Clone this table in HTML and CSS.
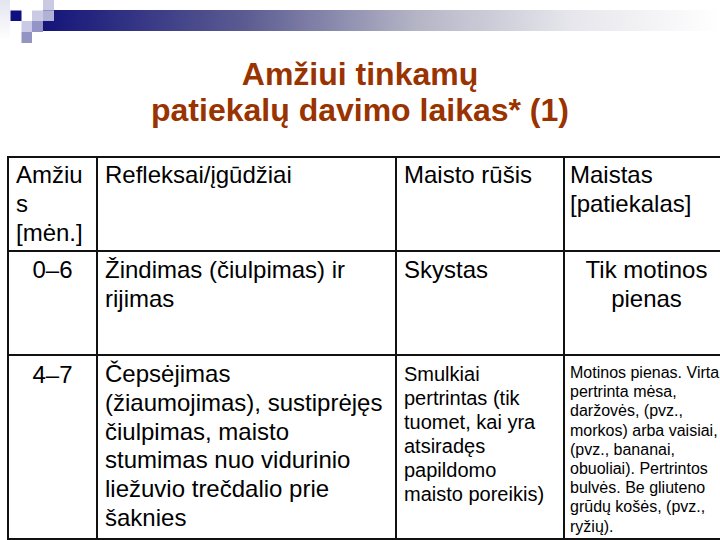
FILE: index.html
```html
<!DOCTYPE html>
<html lang="lt">
<head>
<meta charset="utf-8">
<title>Amžiui tinkamų patiekalų davimo laikas</title>
<link rel="stylesheet" href="styles.css">
</head>
<body>
<header class="band">
  <svg class="band-art" width="720" height="44" viewBox="0 0 720 44" aria-hidden="true">
    <defs>
      <linearGradient id="bar" x1="0" y1="0" x2="1" y2="0">
        <stop offset="0" stop-color="#14147a"/>
        <stop offset="0.3" stop-color="#5c5c92"/>
        <stop offset="0.55" stop-color="#b4b4c6"/>
        <stop offset="0.78" stop-color="#e6e6ec"/>
        <stop offset="1" stop-color="#ffffff"/>
      </linearGradient>
      <linearGradient id="side" x1="0" y1="0" x2="0" y2="1">
        <stop offset="0" stop-color="#e4e4f0"/>
        <stop offset="1" stop-color="#ffffff"/>
      </linearGradient>
    </defs>
    <rect x="43" y="10" width="677" height="21" fill="url(#bar)"/>
    <rect x="0" y="0" width="10" height="40" fill="url(#side)"/>
    <rect x="10.5" y="10.5" width="11" height="10.5" fill="#0f0f80"/>
    <rect x="32" y="10.5" width="11" height="10.5" fill="#cacae2"/>
    <rect x="43" y="0" width="11" height="10.5" fill="#cacae2"/>
    <rect x="43" y="10.5" width="11" height="10.5" fill="#b2b2d6"/>
    <rect x="21.5" y="21" width="10.5" height="11" fill="#cacae6"/>
    <rect x="32" y="21" width="11" height="11" fill="#9494c6"/>
    <rect x="21.5" y="32" width="10.5" height="11" fill="#9494c2"/>
  </svg>
</header>

<h1 class="title">Amžiui tinkamų<br>patiekalų davimo laikas* (1)</h1>

<table class="grid">
  <colgroup>
    <col class="c-age"><col class="c-skill"><col class="c-type"><col class="c-food">
  </colgroup>
  <tr class="row-head">
    <td>Amžiu<br>s<br>[mėn.]</td>
    <td>Refleksai/įgūdžiai</td>
    <td class="pad-type">Maisto rūšis</td>
    <td class="pad-food">Maistas [patiekalas]</td>
  </tr>
  <tr class="row-one">
    <td class="age">0–6</td>
    <td>Žindimas (čiulpimas) ir rijimas</td>
    <td class="pad-type">Skystas</td>
    <td class="pad-food centered">Tik motinos<br>pienas</td>
  </tr>
  <tr class="row-two">
    <td class="age">4–7</td>
    <td>Čepsėjimas (žiaumojimas), sustiprėjęs čiulpimas, maisto stumimas nuo vidurinio liežuvio trečdalio prie šaknies</td>
    <td class="pad-type mid">Smulkiai pertrintas (tik tuomet, kai yra atsiradęs papildomo maisto poreikis)</td>
    <td class="pad-food small">Motinos pienas. Virta pertrinta mėsa, daržovės, (pvz., morkos) arba vaisiai, (pvz., bananai, obuoliai). Pertrintos bulvės. Be gliuteno grūdų košės, (pvz., ryžių).</td>
  </tr>
  <tr class="row-tail">
    <td></td><td></td><td></td><td></td>
  </tr>
</table>
</body>
</html>
```

FILE: styles.css
```css
html, body {
  margin: 0;
  padding: 0;
  background: #ffffff;
  overflow: hidden;
}

body {
  width: 720px;
  height: 540px;
  font-family: "Liberation Sans", Arial, sans-serif;
  color: #000;
}

.band {
  height: 44px;
}

.band-art {
  display: block;
}

.title {
  margin: 12px 0 28px;
  font-size: 32px;
  line-height: 36px;
  font-weight: bold;
  color: #993300;
  text-align: center;
}

.grid {
  margin-left: 7px;
  border-collapse: collapse;
  table-layout: fixed;
  width: 725px;
  font-size: 24px;
  line-height: 1.2;
}

.c-age { width: 89px; }
.c-skill { width: 299px; }
.c-type { width: 168px; }
.c-food { width: 169px; }

.grid td {
  border: 2px solid #111;
  vertical-align: top;
  padding: 3px 8px 0 7px;
}

.grid td.pad-type {
  padding-left: 7px;
  padding-right: 9px;
}

.grid td.pad-food {
  padding-left: 5px;
  padding-right: 9px;
}

.row-head td { height: 89px; }
.row-one td { height: 98px; padding-top: 4px; }
.row-two td { height: 175px; padding-top: 4px; }
.row-tail td { height: 40px; }

.grid td.age {
  text-align: center;
  padding-left: 4px;
  padding-right: 4px;
}

.row-two td.age { padding-top: 5px; }

.grid td.centered {
  text-align: center;
}

.grid td.mid {
  font-size: 20px;
  padding-top: 6px;
}

.grid td.small {
  font-size: 16px;
  padding-top: 7px;
}
```
